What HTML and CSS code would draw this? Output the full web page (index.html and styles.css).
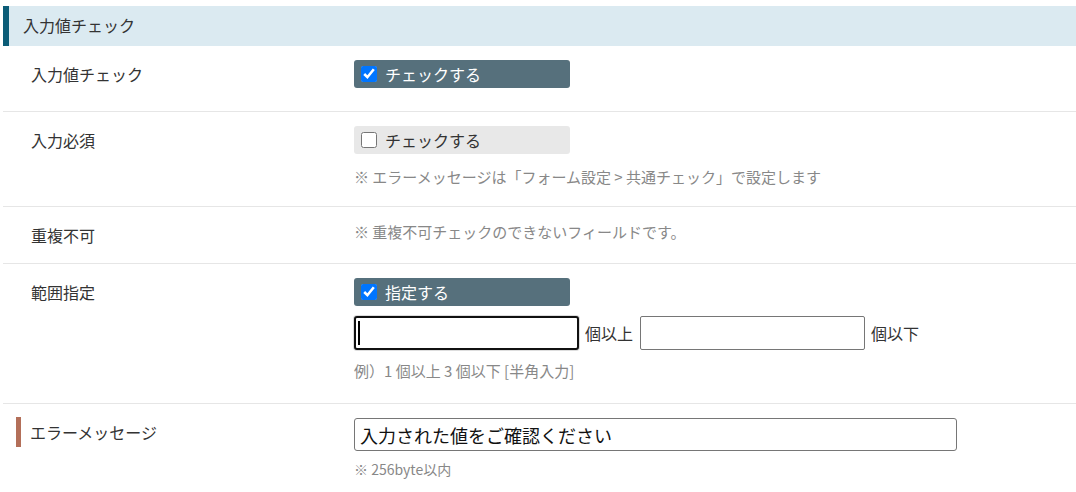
FILE: index.html
```html
<!DOCTYPE html>
<html lang="ja">
<head>
<meta charset="utf-8">
<link rel="stylesheet" href="styles.css">
</head>
<body>
<div class="panel">
  <div class="section-head">入力値チェック</div>

  <div class="row">
    <div class="label">入力値チェック</div>
    <div class="value">
      <label class="check on"><input type="checkbox" checked><span>チェックする</span></label>
    </div>
  </div>

  <div class="row">
    <div class="label">入力必須</div>
    <div class="value">
      <label class="check off"><input type="checkbox"><span>チェックする</span></label>
      <p class="note">※ エラーメッセージは「フォーム設定 &gt; 共通チェック」で設定します</p>
    </div>
  </div>

  <div class="row">
    <div class="label">重複不可</div>
    <div class="value">
      <p class="note only">※ 重複不可チェックのできないフィールドです。</p>
    </div>
  </div>

  <div class="row">
    <div class="label">範囲指定</div>
    <div class="value">
      <label class="check on"><input type="checkbox" checked><span>指定する</span></label>
      <div class="range">
        <span class="field focused"><input type="text" class="num"><span class="caret"></span></span>
        <span class="unit">個以上</span>
        <input type="text" class="num">
        <span class="unit">個以下</span>
      </div>
      <p class="note example">例）1 個以上 3 個以下 [半角入力]</p>
    </div>
  </div>

  <div class="row last">
    <div class="label marked">エラーメッセージ</div>
    <div class="value">
      <input type="text" class="msg" value="入力された値をご確認ください">
      <p class="note small">※ 256byte以内</p>
    </div>
  </div>
</div>
</body>
</html>
```

FILE: styles.css
```css
* { box-sizing: border-box; }

html, body {
  margin: 0;
  padding: 0;
  background: #fff;
}

body {
  font-family: "Noto Sans CJK JP", "Noto Sans", sans-serif;
  color: #333;
  overflow: hidden;
}

.panel {
  padding: 6px 0 0 3px;
}

.section-head {
  height: 40px;
  line-height: 38px;
  background: #dbeaf1;
  border-left: 6px solid #0b5c77;
  padding-left: 14px;
  font-size: 16px;
  color: #333;
}

.row {
  display: grid;
  grid-template-columns: 351px 1fr;
  align-items: start;
  padding: 14px 0 14px;
  border-bottom: 1px solid #e6e6e6;
}

.row.last {
  border-bottom: none;
}

.label {
  padding-left: 28px;
  font-size: 16px;
  line-height: 28px;
  color: #333;
}

.label.marked {
  margin: -1px 0 0 13px;
  padding-left: 9px;
  border-left: 5px solid #b36f59;
  line-height: 30px;
  height: 30px;
}

.value {
  display: flex;
  flex-direction: column;
  align-items: flex-start;
}

.check {
  display: flex;
  align-items: center;
  width: 216px;
  height: 28px;
  border-radius: 3px;
  padding-left: 6px;
  font-size: 16px;
}

.check:last-child {
  margin-bottom: 9px;
}

.check input {
  width: 16px;
  height: 16px;
  margin: 0 8px 0 1px;
}

.check.on {
  background: #56707c;
  color: #fff;
}

.check.off {
  background: #e8e8e8;
  color: #333;
}

.note {
  margin: 0 0 4px;
  font-size: 15px;
  line-height: 22px;
  color: #888;
}

.check + .note {
  margin-top: 12px;
}

.note.only {
  margin: 0;
}

.range {
  display: flex;
  align-items: center;
  margin-top: 10px;
}

.range + .note {
  margin-top: 10px;
  margin-bottom: 7px;
}

.field {
  position: relative;
  display: inline-block;
}

.num {
  display: block;
  width: 225px;
  height: 34px;
  border: 1px solid #767676;
  border-radius: 2px;
  font-size: 18px;
  font-family: inherit;
  padding: 0 5px;
  outline: none;
}

.focused .num {
  border: 2px solid #111;
  border-radius: 3px;
  box-shadow: 0 0 0 1px #ddd;
}

.caret {
  position: absolute;
  left: 4px;
  top: 5px;
  width: 2px;
  height: 24px;
  background: #000;
}

.unit {
  font-size: 16px;
  color: #333;
  padding: 0 7px 0 6px;
}

.msg {
  width: 603px;
  height: 33px;
  border: 1px solid #767676;
  border-radius: 3px;
  font-size: 18px;
  font-family: inherit;
  color: #111;
  padding: 0 5px;
  outline: none;
}

.msg + .note {
  margin-top: 7px;
  font-size: 14px;
}
```
